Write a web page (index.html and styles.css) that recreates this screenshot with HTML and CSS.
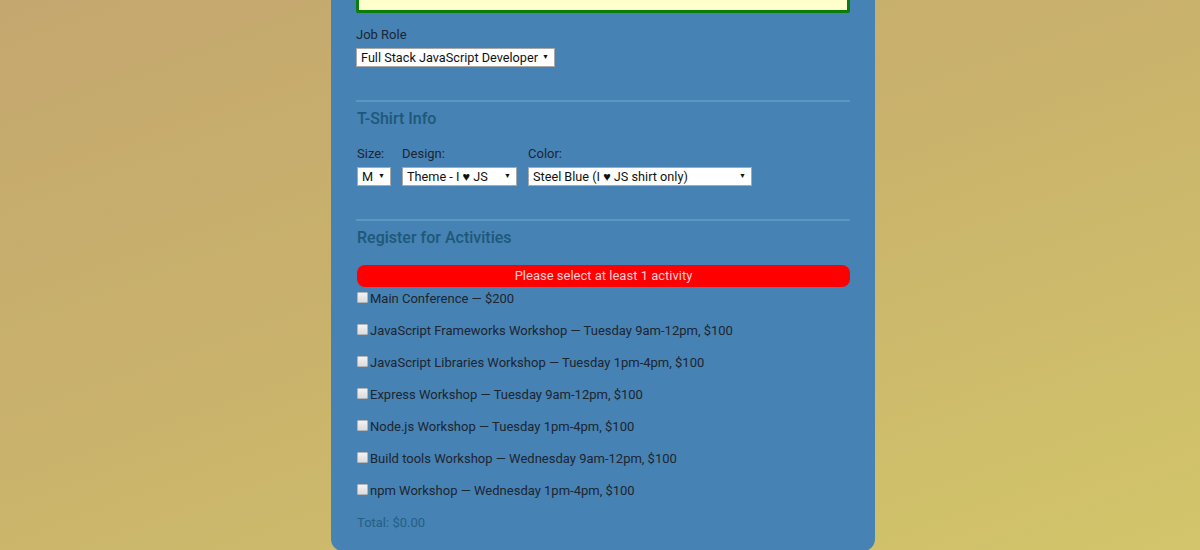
FILE: index.html
```html
<!DOCTYPE html>
<html>
<head>
<meta charset="utf-8">
<link rel="stylesheet" href="styles.css">
</head>
<body>
<form class="card">
  <input class="email" type="text">
  <label class="field-label first">Job Role</label>
  <span class="sel sel-job"><select><option>Full Stack JavaScript Developer</option></select></span>

  <hr class="rule">
  <h2 class="heading">T-Shirt Info</h2>
  <div class="shirt">
    <div class="col">
      <label class="field-label">Size:</label>
      <span class="sel sel-size"><select><option>M</option></select></span>
    </div>
    <div class="col">
      <label class="field-label">Design:</label>
      <span class="sel sel-design"><select><option>Theme - I ♥ JS</option></select></span>
    </div>
    <div class="col">
      <label class="field-label">Color:</label>
      <span class="sel sel-color"><select><option>Steel Blue (I ♥ JS shirt only)</option></select></span>
    </div>
  </div>

  <hr class="rule">
  <h2 class="heading">Register for Activities</h2>
  <div class="error">Please select at least 1 activity</div>
  <ul class="acts">
    <li><input type="checkbox">Main Conference — $200</li>
    <li><input type="checkbox">JavaScript Frameworks Workshop — Tuesday 9am-12pm, $100</li>
    <li><input type="checkbox">JavaScript Libraries Workshop — Tuesday 1pm-4pm, $100</li>
    <li><input type="checkbox">Express Workshop — Tuesday 9am-12pm, $100</li>
    <li><input type="checkbox">Node.js Workshop — Tuesday 1pm-4pm, $100</li>
    <li><input type="checkbox">Build tools Workshop — Wednesday 9am-12pm, $100</li>
    <li><input type="checkbox">npm Workshop — Wednesday 1pm-4pm, $100</li>
  </ul>
  <p class="total">Total: $0.00</p>
</form>
</body>
</html>
```
FILE: styles.css
```css
html, body {
  margin: 0;
  height: 100%;
}
body {
  background: linear-gradient(160deg, #c4a76f 0%, #c9b26c 45%, #d2c56a 100%);
  font-family: Roboto, "Liberation Sans", sans-serif;
  color: #1d2530;
  overflow: hidden;
}
.card {
  width: 494px;
  margin: 0 0 0 331px;
  background: #4682b4;
  padding: 0 25px 18px 25px;
  border-radius: 0 0 12px 12px;
}
.email {
  display: block;
  box-sizing: border-box;
  width: 494px;
  height: 36px;
  margin: -23px 0 0 0;
  border: 3px solid #0a7d0a;
  border-radius: 2px;
  background: #ffffcc;
  outline: none;
}
.field-label {
  display: block;
  font-size: 13px;
  line-height: 20px;
  margin-top: 11px;
}
.field-label.first { margin-top: 12px; }
.sel {
  position: relative;
  display: block;
  margin-top: 3px;
  background: #fff;
  border: 1px solid #a9a9a9;
  box-sizing: border-box;
  height: 19px;
}
.sel select {
  display: block;
  appearance: none;
  -webkit-appearance: none;
  border: 0;
  background: transparent;
  font-family: Roboto, "Liberation Sans", sans-serif;
  font-size: 12.7px;
  color: #111;
  height: 17px;
  line-height: 15px;
  padding: 0 0 1px 4px;
  margin: 0;
  width: 100%;
  outline: none;
}
.sel::after {
  content: "▼";
  position: absolute;
  right: 5px;
  top: 4px;
  font-size: 7px;
  line-height: 8px;
  color: #111;
  pointer-events: none;
}
.sel-job { width: 199px; }
.sel-size { width: 34px; }
.sel-design { width: 115px; }
.sel-color { width: 224px; }
.rule {
  border: 0;
  height: 2px;
  background: #5c97c2;
  margin: 33px 0 0 0;
}
.heading {
  margin: 6px 0 0 1px;
  font-size: 16px;
  line-height: 22px;
  font-weight: 500;
  color: #1e5878;
}
.shirt {
  display: flex;
  gap: 11px;
  margin-left: 1px;
  margin-top: 3px;
}
.col .sel { margin-top: 3px; }
.error {
  margin: 16px 0 0 1px;
  height: 22px;
  line-height: 22px;
  background: #ff0000;
  color: #ffcfd6;
  text-align: center;
  font-size: 13px;
  border-radius: 8px;
}
.acts {
  list-style: none;
  margin: 1px 0 0 0;
  padding: 0;
}
.acts li {
  display: flex;
  align-items: center;
  height: 20px;
  font-size: 13px;
  margin-bottom: 12px;
}
.acts li:last-child { margin-bottom: 0; }
.acts input {
  appearance: none;
  -webkit-appearance: none;
  width: 9px;
  height: 9px;
  margin: -2px 2px 0 1px;
  border: 1px solid #b5b5b5;
  border-radius: 1px;
  background: linear-gradient(#f2f2f2, #dcdcdc);
  box-sizing: content-box;
}
.total {
  margin: 13px 0 0 1px;
  font-size: 13px;
  line-height: 20px;
  color: #255f84;
}
```
